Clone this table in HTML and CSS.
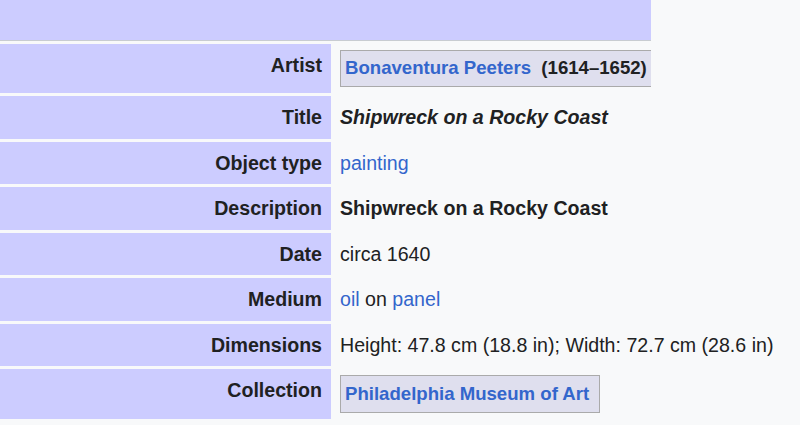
FILE: index.html
```html
<!DOCTYPE html>
<html lang="en">
<head>
<meta charset="utf-8">
<title>Shipwreck on a Rocky Coast</title>
<link rel="stylesheet" href="styles.css">
</head>
<body>
<div class="band"></div>
<table class="info">
  <tr>
    <th class="label">Artist</th>
    <td class="value boxcell">
      <div class="clip"><span class="creator"><a href="#">Bonaventura Peeters</a>&nbsp;&nbsp;(1614–1652)</span></div>
    </td>
  </tr>
  <tr>
    <th class="label">Title</th>
    <td class="value"><b><i>Shipwreck on a Rocky Coast</i></b></td>
  </tr>
  <tr>
    <th class="label">Object type</th>
    <td class="value"><a href="#">painting</a></td>
  </tr>
  <tr>
    <th class="label">Description</th>
    <td class="value"><b>Shipwreck on a Rocky Coast</b></td>
  </tr>
  <tr>
    <th class="label">Date</th>
    <td class="value">circa 1640</td>
  </tr>
  <tr>
    <th class="label">Medium</th>
    <td class="value"><a href="#">oil</a> on <a href="#">panel</a></td>
  </tr>
  <tr>
    <th class="label">Dimensions</th>
    <td class="value">Height: 47.8 cm (18.8 in); Width: 72.7 cm (28.6 in)</td>
  </tr>
  <tr>
    <th class="label">Collection</th>
    <td class="value boxcell"><span class="creator inst"><a href="#">Philadelphia Museum of Art</a></span></td>
  </tr>
</table>
</body>
</html>
```
FILE: styles.css
```css
html, body {
  margin: 0;
  padding: 0;
  background: #f8f9fa;
  color: #202122;
  font-family: "Liberation Sans", Arial, sans-serif;
  font-size: 19.6px;
  overflow: hidden;
}

a {
  color: #3366cc;
  text-decoration: none;
}

.band {
  width: 651px;
  height: 40px;
  background: #ccccff;
  border-bottom: 1px solid #c8ccd1;
}

.info {
  border-collapse: separate;
  border-spacing: 0 3px;
  margin-top: 0;
  line-height: 22.5px;
  white-space: nowrap;
}

.label {
  box-sizing: border-box;
  width: 331px;
  background: #ccccff;
  text-align: right;
  vertical-align: top;
  font-weight: bold;
  padding: 10px 9px 10px 0;
}

.value {
  padding: 10px 8px 10px 9px;
  vertical-align: top;
  text-align: left;
}

.value.boxcell {
  padding-top: 6px;
  padding-bottom: 6px;
}

.clip {
  width: 311px;
  overflow: hidden;
}

.creator {
  display: inline-block;
  font-size: 18.6px;
  font-weight: bold;
  line-height: 22px;
  background: #dfdfee;
  border: 1px solid #aaaaaa;
  padding: 6px 10px 7px 4px;
  white-space: nowrap;
}

.creator a {
  font-weight: bold;
}

.inst {
  padding-top: 7px;
}
```
